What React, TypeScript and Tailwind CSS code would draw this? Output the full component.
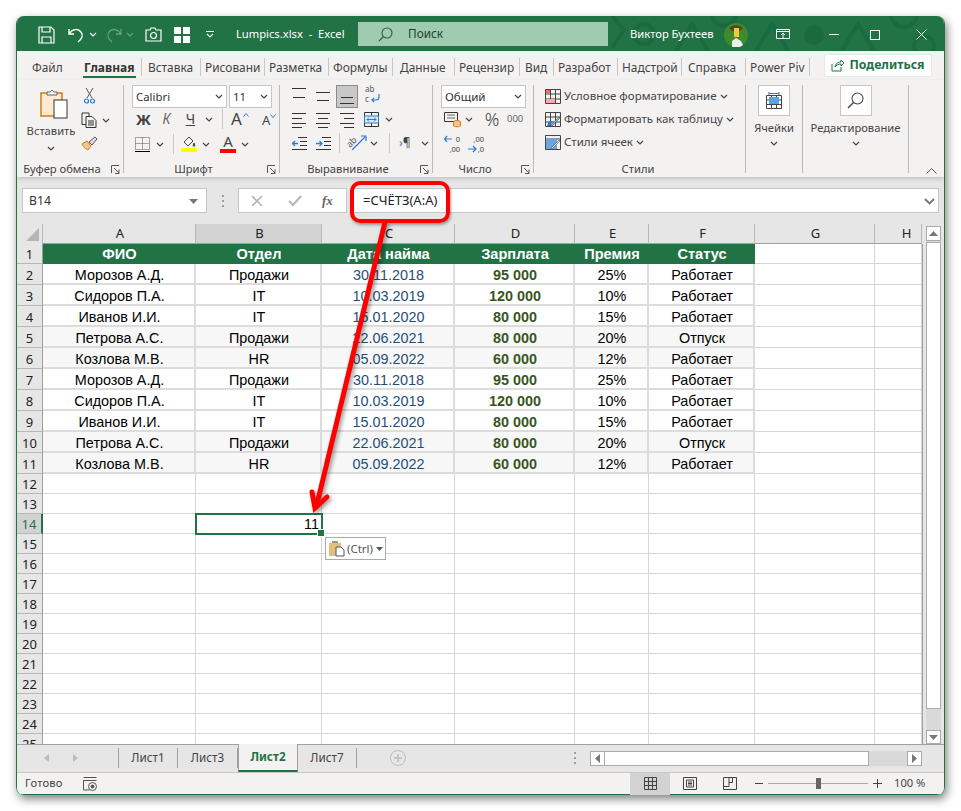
import React from "react";

const Chev = ({ c = "#444", className = "" }: { c?: string; className?: string }) => (
  <svg width="8" height="5" viewBox="0 0 8 5" className={"shrink-0 " + className}>
    <path d="M1 1l3 3 3-3" fill="none" stroke={c} strokeWidth="1.2" />
  </svg>
);

const Launcher = () => (
  <svg width="9" height="9" viewBox="0 0 9 9" className="shrink-0 ml-[4px]">
    <path d="M.5 8V.5H8M3 3l5 5M8 4.5V8.5H4" fill="none" stroke="#555" strokeWidth="1" />
  </svg>
);

const Lines = ({ widths, y = [1, 6, 11, 16], c = "#333", w = 15 }: { widths: [number, number][]; y?: number[]; c?: string; w?: number }) => (
  <svg width={w} height="17" viewBox={`0 0 ${w} 17`} className="shrink-0">
    {widths.map(([a, b], i) => (
      <path key={i} d={`M${a} ${y[i] + 0.5}H${b}`} stroke={c} strokeWidth="1" />
    ))}
  </svg>
);

const tabs: { t: string; w: number; pad: string; active?: boolean }[] = [
  { t: "Файл", w: 60, pad: "pl-[15px]" },
  { t: "Главная", w: 65, pad: "pl-[7px]", active: true },
  { t: "Вставка", w: 59, pad: "pl-[6px]" },
  { t: "Рисовани", w: 64, pad: "pl-[4px]" },
  { t: "Разметка", w: 64, pad: "pl-[4px]" },
  { t: "Формулы", w: 64, pad: "pl-[4px]" },
  { t: "Данные", w: 62, pad: "pl-[7px]" },
  { t: "Рецензир", w: 65, pad: "pl-[4px]" },
  { t: "Вид", w: 34, pad: "pl-[5px]" },
  { t: "Разработ", w: 64, pad: "pl-[4px]" },
  { t: "Надстрой", w: 64, pad: "pl-[4px]" },
  { t: "Справка", w: 64, pad: "pl-[6px]" },
  { t: "Power Piv", w: 64, pad: "pl-[4px]" },
];

const colW = [153, 126, 133, 120, 74, 106, 120, 47];
const colNames = ["A", "B", "C", "D", "E", "F", "G", "H"];
const data: string[][] = [
  ["Морозов А.Д.", "Продажи", "30.11.2018", "95 000", "25%", "Работает"],
  ["Сидоров П.А.", "IT", "10.03.2019", "120 000", "10%", "Работает"],
  ["Иванов И.И.", "IT", "15.01.2020", "80 000", "15%", "Работает"],
  ["Петрова А.С.", "Продажи", "22.06.2021", "80 000", "20%", "Отпуск"],
  ["Козлова М.В.", "HR", "05.09.2022", "60 000", "12%", "Работает"],
  ["Морозов А.Д.", "Продажи", "30.11.2018", "95 000", "25%", "Работает"],
  ["Сидоров П.А.", "IT", "10.03.2019", "120 000", "10%", "Работает"],
  ["Иванов И.И.", "IT", "15.01.2020", "80 000", "15%", "Работает"],
  ["Петрова А.С.", "Продажи", "22.06.2021", "80 000", "20%", "Отпуск"],
  ["Козлова М.В.", "HR", "05.09.2022", "60 000", "12%", "Работает"],
];
const header = ["ФИО", "Отдел", "Дата найма", "Зарплата", "Премия", "Статус"];

const RowHead = ({ n, sel, h, pt }: { n: number; sel?: boolean; h: string; pt: string }) => (
  <div
    className={
      "w-[26px] shrink-0 flex items-center justify-center text-[13px] font-['Noto_Sans',sans-serif] border-b border-[#b8b8b8] " +
      h +
      " " +
      pt +
      (sel ? " bg-[#d2d2d2] text-[#217346] border-r-2 border-r-[#217346]" : " bg-[#e6e6e6] text-[#222] border-r border-r-[#9e9e9e]")
    }
  >
    {n}
  </div>
);

const TitleBar = () => (
  <div className="relative h-[35px] pt-[2px] bg-[#217346] flex items-center text-white shrink-0 overflow-hidden">
    <svg width="340" height="35" viewBox="0 0 340 35" className="absolute right-0 top-0" fill="none" stroke="#1b6a3f" strokeWidth="4">
      <circle cx="40" cy="18" r="10" />
      <path d="M70 38l18-30 18 30zM150 38l18-30 18 30zM236 38l18-30 18 30z" />
      <circle cx="120" cy="-2" r="12" />
      <circle cx="210" cy="19" r="8" fill="#1b6a3f" />
      <circle cx="300" cy="-2" r="13" />
      <circle cx="320" cy="30" r="10" />
      <path d="M8 0l12 14L8 32" />
    </svg>
    <svg width="17" height="18" viewBox="0 0 17 18" className="ml-[21px] shrink-0" fill="none" stroke="#fff" strokeWidth="1.2">
      <path d="M1 1h12l3 3v13H1zM4 1v5h8V1M4 17v-6h9v6" />
    </svg>
    <svg width="16" height="16" viewBox="0 0 16 16" className="ml-[13px] shrink-0" fill="none" stroke="#fff" strokeWidth="1.4">
      <path d="M1 2v5h5M1 7c3-5 9-6 12-2 2.500 3 1 7-3 10" />
    </svg>
    <Chev c="#fff" className="ml-[5px]" />
    <svg width="16" height="16" viewBox="0 0 16 16" className="ml-[9px] shrink-0" fill="none" stroke="#63a283" strokeWidth="1.3">
      <path d="M15 2v5h-5M15 7c-3-5-9-6-12-2-2 3-1 7 3 10" />
    </svg>
    <Chev c="#63a283" className="ml-[4px]" />
    <svg width="17" height="15" viewBox="0 0 17 15" className="ml-[11px] shrink-0" fill="none" stroke="#fff" strokeWidth="1.2">
      <path d="M1 3h4l1-2h4l1 2h5v11H1z" />
      <circle cx="8.500" cy="8.500" r="3" />
    </svg>
    <svg width="16" height="16" viewBox="0 0 16 16" className="ml-[12px] shrink-0" fill="#fff">
      <rect x="0" y="0" width="7" height="7" />
      <rect x="9" y="0" width="7" height="7" />
      <rect x="0" y="9" width="7" height="7" />
      <rect x="9" y="9" width="7" height="7" />
    </svg>
    <svg width="8" height="7" viewBox="0 0 8 7" className="ml-[16px] shrink-0" fill="none" stroke="#fff" strokeWidth="1.1">
      <path d="M0 .5h8M1 3l3 3 3-3" />
    </svg>
    <span className="ml-[22px] w-[122px] text-[11.2px] whitespace-pre">Lumpics.xlsx  -  Excel</span>
    <div className="w-[250px] h-[24px] bg-[#9fcbb1] flex items-center text-[#26402f] text-[11.8px] shrink-0 mt-[-1px]">
      <svg width="15" height="15" viewBox="0 0 15 15" className="ml-[20px]" fill="none" stroke="#2f5d44" strokeWidth="1.1">
        <circle cx="9" cy="6" r="5" />
        <path d="M5.500 9.500L1 14" />
      </svg>
      <span className="ml-[15px]">Поиск</span>
    </div>
    <span className="ml-[22px] w-[94px] text-[11.2px] whitespace-nowrap relative">Виктор Бухтеев</span>
    <svg width="24" height="24" viewBox="0 0 24 24" className="shrink-0 relative">
      <circle cx="12" cy="12" r="12" fill="#3f8a2a" />
      <path d="M5 5a10 10 0 0 1 14 0l-3 3H8z" fill="#5d3f1f" />
      <path d="M10 5h5v9h-5z" fill="#f1c93b" />
      <path d="M8 24v-6l4-3 5 3 2 4-3 2z" fill="#eee" />
    </svg>
    <svg width="14" height="11" viewBox="0 0 14 11" className="ml-[28px] shrink-0 relative" fill="none" stroke="#fff" strokeWidth="1">
      <path d="M.5.500h13v9H.5zM.5 2.500h13M7 9V4M5 6l2-2 2 2" />
    </svg>
    <div className="ml-[39px] w-[10px] h-px bg-white shrink-0 relative" />
    <div className="ml-[31px] w-[10px] h-[10px] border border-white shrink-0 relative" />
    <svg width="11" height="11" viewBox="0 0 11 11" className="ml-[36px] shrink-0 relative" stroke="#fff" strokeWidth="1">
      <path d="M.5.500l10 10M10.500.500l-10 10" />
    </svg>
  </div>
);

const TabsRow = () => (
  <div className="h-[29px] pt-[3px] bg-[#f3f2f1] flex items-center shrink-0 text-[11.9px] text-[#444]">
    {tabs.map(({ t, w, pad, active }, i) => (
      <div
        key={t}
        style={{ width: w }}
        className={
          "h-[18px] shrink-0 overflow-hidden whitespace-nowrap leading-[18px] " +
          pad +
          (i === 0 ? "" : " border-r border-[#c8c6c4]")
        }
      >
        {active ? <span className="font-bold text-[#333] text-[12px]">{t}</span> : t}
      </div>
    ))}
    <div className="ml-[14px] -mt-[3px] w-[108px] h-[23px] bg-white rounded-[2px] border border-[#e8e8e8] flex items-center justify-center text-[#217346] font-bold text-[12.3px] shrink-0">
      <svg width="13" height="13" viewBox="0 0 13 13" className="mr-[5px]" fill="none" stroke="#217346" strokeWidth="1">
        <path d="M1 5v7h9V8M4 8c0-3 3-5 6-5V1l3 3-3 3V5C8 5 5 6 4 8z" />
      </svg>
      Поделиться
    </div>
  </div>
);

const Group = ({ w, label, launcher, children }: { w: number; label?: string; launcher?: boolean; children: React.ReactNode }) => (
  <div style={{ width: w }} className="h-[88px] mt-[5px] border-r border-[#bdbbb9] shrink-0 flex flex-col">
    <div className="h-[76px] shrink-0">{children}</div>
    <div className="h-[16px] flex items-center text-[11.2px] text-[#444] leading-[16px] pr-[3px]">
      <span className="flex-1 text-center">{label}</span>
      {launcher && <Launcher />}
    </div>
  </div>
);

const Clipboard = () => (
  <Group w={107} label="Буфер обмена" launcher>
    <div className="flex">
      <div className="w-[58px] ml-[5px] flex flex-col items-center shrink-0">
        <svg width="28" height="30" viewBox="0 0 28 30" className="mt-[4px] ml-[5px] shrink-0">
          <path d="M1 4h21v23H1z" fill="#fbe9d3" stroke="#d67b12" strokeWidth="1.5" />
          <path d="M7 6V3h3l2-2 2 2h3v3z" fill="#f3f2f1" stroke="#666" strokeWidth="1" />
          <rect x="14" y="11" width="13" height="18" fill="#fff" stroke="#333" strokeWidth="1" />
        </svg>
        <span className="text-[11.2px] text-[#444] mt-[4px] leading-[16px] whitespace-nowrap">Вставить</span>
        <Chev className="mt-[7px]" />
      </div>
      <div className="flex flex-col ml-[1px] shrink-0 items-start">
        <svg width="11" height="16" viewBox="0 0 11 16" className="ml-[3px] mt-[3px]" fill="none">
          <path d="M2 0l6 10M9 0L3 10" stroke="#555" strokeWidth="1" />
          <circle cx="2.500" cy="13" r="2" stroke="#2b7cd3" strokeWidth="1.2" />
          <circle cx="8.500" cy="13" r="2" stroke="#2b7cd3" strokeWidth="1.2" />
        </svg>
        <div className="flex items-center mt-[8px] h-[16px]">
          <svg width="16" height="16" viewBox="0 0 16 16" fill="none" stroke="#333" strokeWidth="1">
            <path d="M5 12.500H1V1h7v3M5 4.500h6l4 4v7H5zM7 9h6M7 11h6M7 13h6" />
          </svg>
          <Chev className="ml-[5px]" />
        </div>
        <svg width="17" height="15" viewBox="0 0 17 15" className="mt-[8px]" fill="none">
          <path d="M1 8l5-3 4 5-3 4C5 13 3 12 1 8z" fill="#f6c48f" stroke="#d67b12" strokeWidth="1" />
          <path d="M8 6l6-5 2 2-5 6z" fill="#ddd" stroke="#555" strokeWidth="1" />
        </svg>
      </div>
    </div>
  </Group>
);

const Caret = ({ up, className = "" }: { up?: boolean; className?: string }) => (
  <svg width="6" height="4" viewBox="0 0 6 4" className={"shrink-0 " + className} fill="none" stroke="#2b7cd3" strokeWidth="1">
    <path d={up ? "M.5 3.500l2.500-3 2.500 3" : "M.5.500l2.500 3 2.500-3"} />
  </svg>
);

const Font = () => (
  <Group w={156} label="Шрифт" launcher>
    <div className="flex pl-[8px]">
      <div className="w-[95px] h-[23px] bg-white border border-[#c6c6c6] flex items-center justify-between px-[3px] text-[11.4px] text-[#333]">
        Calibri
        <Chev />
      </div>
      <div className="w-[43px] h-[23px] ml-[2px] bg-white border border-[#c6c6c6] flex items-center justify-between px-[3px] text-[11.4px] text-[#333]">
        11
        <Chev />
      </div>
    </div>
    <div className="flex items-center pl-[12px] mt-[2px] h-[18px] text-[#444]">
      <span className="w-[14px] text-center font-bold text-[15px] leading-[18px] text-[#444]">Ж</span>
      <span className="ml-[11px] w-[11px] text-center italic text-[14px] leading-[18px] text-[#666]">К</span>
      <span className="ml-[13px] w-[11px] text-center underline text-[14px] leading-[18px]">Ч</span>
      <Chev className="ml-[9px]" />
      <div className="ml-[9px] w-px h-[20px] bg-[#c8c6c4]" />
      <span className="ml-[8px] text-[17px] leading-[18px] text-[#444]">A</span>
      <Caret up className="mb-[8px] ml-[1px]" />
      <span className="ml-[13px] text-[13px] leading-[18px] mt-[2px] text-[#444]">A</span>
      <Caret className="mb-[7px]" />
    </div>
    <div className="flex items-center pl-[11px] mt-[7px] h-[18px]">
      <svg width="15" height="15" viewBox="0 0 15 15" fill="none">
        <path d="M.5.500h14v12H.5zM7.500.500v12M.5 6.500h14" stroke="#555" strokeWidth="1" strokeDasharray="1 1" />
        <path d="M0 14.500h15" stroke="#000" strokeWidth="1" />
      </svg>
      <Chev className="ml-[6px]" />
      <div className="ml-[9px] w-px h-[20px] bg-[#c8c6c4]" />
      <div className="ml-[7px] flex flex-col items-center w-[16px]">
        <svg width="14" height="12" viewBox="0 0 14 12" fill="none" stroke="#444" strokeWidth="1">
          <path d="M2 6l5-5 4 4-5 5zM12 7l1 3h-2z" />
        </svg>
        <div className="w-[16px] h-[4px] bg-[#ffff00]" />
      </div>
      <Chev className="ml-[5px]" />
      <div className="ml-[10px] flex flex-col items-center w-[16px]">
        <span className="text-[15px] leading-[13px] text-[#444]">A</span>
        <div className="w-[16px] h-[4px] bg-[#ff0000] mt-[1px]" />
      </div>
      <Chev className="ml-[5px]" />
    </div>
  </Group>
);

const Align = () => (
  <Group w={153} label="Выравнивание" launcher>
    <div className="flex items-start pl-[12px] h-[23px]">
      <Lines widths={[[0, 14], [1, 13]]} y={[3, 12]} />
      <div className="ml-[9px]">
        <Lines widths={[[0, 14], [1, 13]]} y={[7, 15]} />
      </div>
      <div className="ml-[5px] w-[22px] h-[23px] bg-[#c8c8c8] border border-[#8a8a8a] flex items-center justify-center shrink-0">
        <Lines widths={[[1, 13], [0, 14]]} y={[9, 15]} />
      </div>
      <svg width="16" height="20" viewBox="0 0 16 20" className="ml-[7px] overflow-visible" fill="none">
        <text x="0" y="7" fontSize="8" fill="#555" fontFamily="Noto Sans">ab</text>
        <text x="0" y="17" fontSize="8" fill="#555" fontFamily="Noto Sans">c</text>
        <path d="M14 9v3c0 2-1 3-3 3H7M9 13l-2 2 2 2" stroke="#2b7cd3" strokeWidth="1.200" />
      </svg>
    </div>
    <div className="flex items-center pl-[12px] mt-[2px] h-[18px]">
      <Lines widths={[[0, 14], [0, 10], [0, 14], [0, 10]]} y={[2, 7, 12, 16]} />
      <div className="ml-[9px]"><Lines widths={[[0, 14], [2, 12], [0, 14], [2, 12]]} y={[2, 7, 12, 16]} /></div>
      <div className="ml-[9px]"><Lines widths={[[0, 14], [4, 14], [0, 14], [4, 14]]} y={[2, 7, 12, 16]} /></div>
      <svg width="15" height="15" viewBox="0 0 15 15" className="ml-[9px]" fill="none">
        <path d="M.5.500h14v14H.5zM7.500.500v3M7.500 11v3.500" stroke="#333" />
        <path d="M.5 4h14v7H.5z" fill="#dbeafb" stroke="#2b7cd3" />
        <path d="M3 7.500h9M5 5.500l-2 2 2 2M10 5.500l2 2-2 2" stroke="#2b7cd3" />
      </svg>
      <Chev className="ml-[6px]" />
    </div>
    <div className="flex items-center pl-[12px] mt-[6px] h-[18px]">
      <svg width="15" height="13" viewBox="0 0 15 13" fill="none">
        <path d="M6 .5h9M8 4.500h7M8 8.500h7M0 12.500h15" stroke="#333" />
        <path d="M0 6.500h6M3 4L.5 6.500 3 9" stroke="#2b7cd3" strokeWidth="1.300" />
      </svg>
      <svg width="15" height="13" viewBox="0 0 15 13" className="ml-[9px]" fill="none">
        <path d="M6 .5h9M8 4.500h7M8 8.500h7M0 12.500h15" stroke="#333" />
        <path d="M0 6.500h6M3.500 4L6 6.500 3.500 9" stroke="#2b7cd3" strokeWidth="1.300" />
      </svg>
      <div className="ml-[8px] w-px h-[20px] bg-[#c8c6c4]" />
      <svg width="20" height="18" viewBox="0 0 20 18" className="ml-[7px] overflow-visible" fill="none">
        <text x="0" y="11" fontSize="9" fill="#555" fontFamily="Noto Sans" transform="rotate(-45 5 9)">ab</text>
        <path d="M5 16L18 3M14 2h5v5" stroke="#2b7cd3" strokeWidth="1.200" />
      </svg>
      <Chev className="ml-[3px]" />
      <div className="ml-[11px] w-px h-[20px] bg-[#c8c6c4]" />
      <span className="ml-[9px] text-[12px] leading-[14px] w-[12px] text-[#444] whitespace-nowrap"><span className="text-[#2b7cd3]">›</span>¶</span>
      <Chev className="ml-[10px]" />
    </div>
  </Group>
);

const NumberG = () => (
  <Group w={101} label="Число" launcher>
    <div className="ml-[8px] w-[85px] h-[23px] bg-white border border-[#c6c6c6] flex items-center justify-between px-[3px] text-[11.6px] text-[#333]">
      Общий
      <Chev />
    </div>
    <div className="flex items-center pl-[11px] mt-[2px] h-[18px]">
      <svg width="18" height="17" viewBox="0 0 18 17" fill="none" className="shrink-0">
        <path d="M.5 1.500h13v9H.5z" stroke="#333" />
        <path d="M3 4h8M3 7h8" stroke="#666" />
        <ellipse cx="13" cy="11" rx="3.500" ry="1.500" fill="#f6c48f" stroke="#d67b12" />
        <path d="M9.500 11v4c0 1 7 1 7 0v-4" fill="#f6c48f" stroke="#d67b12" />
      </svg>
      <Chev className="ml-[3px]" />
      <span className="ml-[10px] text-[18px] font-light leading-[18px] text-[#444] w-[18px] text-center">%</span>
      <span className="ml-[6px] text-[9.5px] leading-[18px] text-[#666]">000</span>
    </div>
    <div className="flex items-center pl-[11px] mt-[7px] h-[18px]">
      <div className="w-[16px] h-[19px] flex flex-col justify-between text-[7.5px] leading-[9px] text-[#444]">
        <div className="flex items-center justify-between h-[9px]">
          <svg width="9" height="8" viewBox="0 0 9 8" className="shrink-0" fill="none" stroke="#2b7cd3" strokeWidth="1.200">
            <path d="M0 4h8M3 1L.5 4 3 7" />
          </svg>
          <span>0</span>
        </div>
        <span className="block text-right">,00</span>
      </div>
      <div className="ml-[8px] w-[16px] h-[19px] flex flex-col justify-between text-[7.5px] leading-[9px] text-[#444]">
        <span className="block text-right">,00</span>
        <div className="flex items-center justify-between h-[9px]">
          <svg width="9" height="8" viewBox="0 0 9 8" className="shrink-0" fill="none" stroke="#2b7cd3" strokeWidth="1.200">
            <path d="M0 4h8M5 1l3 3-3 3" />
          </svg>
          <span>,0</span>
        </div>
      </div>
    </div>
  </Group>
);

const StyleRow = ({ icon, text, mt }: { icon: React.ReactNode; text: string; mt: string }) => (
  <div className={"flex items-center h-[18px] pl-[11px] text-[11.5px] text-[#444] " + mt}>
    {icon}
    <span className="ml-[3px] whitespace-nowrap">{text}</span>
    <Chev className="ml-[3px]" />
  </div>
);

const Styles = () => (
  <Group w={212} label="Стили">
    <StyleRow
      mt="mt-[2px]"
      text="Условное форматирование"
      icon={
        <svg width="16" height="15" viewBox="0 0 16 15" fill="none" className="shrink-0">
          <path d="M.5.500h15v14H.5zM5.500.500v14M10.500.500v14M.5 5h15M.5 10h15" stroke="#444" />
          <rect x="1" y="1" width="4" height="4" fill="#f26d6d" />
          <rect x="1" y="10" width="9" height="4" fill="#f9a9a9" />
        </svg>
      }
    />
    <StyleRow
      mt="mt-[5px]"
      text="Форматировать как таблицу"
      icon={
        <svg width="16" height="15" viewBox="0 0 16 15" fill="none" className="shrink-0">
          <path d="M.5.500h15v14H.5zM5.500.500v14M10.500.500v14M.5 5h15M.5 10h15" stroke="#444" />
          <path d="M2 14l2-5h4l-3 5z" fill="#2b7cd3" />
          <path d="M6 13L14 5l1 1-8 8z" fill="#8ab8e8" stroke="#555" strokeWidth=".6" />
        </svg>
      }
    />
    <StyleRow
      mt="mt-[5px]"
      text="Стили ячеек"
      icon={
        <svg width="16" height="15" viewBox="0 0 16 15" fill="none" className="shrink-0">
          <path d="M.5.500h15v14H.5z" stroke="#444" />
          <path d="M1 4h14" stroke="#444" />
          <rect x="1" y="4" width="11" height="10" fill="#6aa7e2" />
          <path d="M6 13L14 5l1 1-8 8z" fill="#ddd" stroke="#555" strokeWidth=".6" />
        </svg>
      }
    />
  </Group>
);

const BigBtn = ({ children }: { children: React.ReactNode }) => (
  <div className="w-[32px] h-[31px] bg-white border border-[#c6c6c6] flex items-center justify-center shrink-0">{children}</div>
);

const Cells = () => (
  <Group w={57}>
    <div className="flex flex-col items-center">
      <BigBtn>
        <svg width="16" height="17" viewBox="0 0 16 17" fill="none">
          <path d="M.5 3.500h15v13H.5zM5.500 3.500v13M10.500 3.500v13M.5 8h15M.5 12.500h15" stroke="#444" />
          <rect x="3" y="5" width="10" height="7" fill="#5ba3e0" />
          <path d="M3 1.500h10M3 0v3M13 0v3" stroke="#2b7cd3" />
        </svg>
      </BigBtn>
      <span className="text-[11.2px] text-[#444] mt-[4px] leading-[16px]">Ячейки</span>
      <Chev className="mt-[5px]" />
    </div>
  </Group>
);

const Editing = () => (
  <Group w={106}>
    <div className="flex flex-col items-center">
      <BigBtn>
        <svg width="17" height="17" viewBox="0 0 17 17" fill="none" stroke="#444" strokeWidth="1.100">
          <circle cx="10.500" cy="6.500" r="5.500" />
          <path d="M6.500 10.500L1 16" strokeWidth="1.500" />
        </svg>
      </BigBtn>
      <span className="text-[11.2px] text-[#444] mt-[4px] leading-[16px] whitespace-nowrap">Редактирование</span>
      <Chev className="mt-[5px]" />
    </div>
  </Group>
);

const Ribbon = () => (
  <div className="h-[97px] bg-[#f3f2f1] flex shrink-0 relative shadow-[0_2px_4px_rgba(0,0,0,0.15)] z-10">
    <Clipboard />
    <Font />
    <Align />
    <NumberG />
    <Styles />
    <Cells />
    <Editing />
    <svg width="11" height="6" viewBox="0 0 11 6" className="ml-[17px] mt-[88px] shrink-0" fill="none" stroke="#555" strokeWidth="1">
      <path d="M.5 5.500l5-5 5 5" />
    </svg>
  </div>
);

const FormulaBar = () => (
  <div className="h-[47px] bg-[#e6e6e6] flex pt-[11px] shrink-0 relative">
    <div className="ml-[5px] w-[185px] h-[25px] pt-[1px] bg-white border border-[#c6c6c6] flex items-center justify-between pl-[6px] pr-[8px] text-[12.2px] text-[#333] shrink-0">
      B14
      <svg width="9" height="5" viewBox="0 0 9 5"><path d="M0 0h9L4.500 5z" fill="#777" /></svg>
    </div>
    <div className="w-[31px] flex flex-col items-center justify-center gap-[3px] h-[25px] shrink-0">
      <i className="w-[2px] h-[2px] bg-[#a0a0a0]" />
      <i className="w-[2px] h-[2px] bg-[#a0a0a0]" />
      <i className="w-[2px] h-[2px] bg-[#a0a0a0]" />
    </div>
    <div className="w-[109px] h-[25px] bg-white border border-[#c6c6c6] flex items-center shrink-0">
      <svg width="12" height="12" viewBox="0 0 12 12" className="ml-[12px]" stroke="#b5b5b5" strokeWidth="1.600"><path d="M1 1l10 10M11 1L1 11" /></svg>
      <svg width="14" height="12" viewBox="0 0 14 12" className="ml-[25px]" fill="none" stroke="#b5b5b5" strokeWidth="2"><path d="M1 6l4 4 8-9" /></svg>
      <span className="ml-[20px] text-[13px] italic font-bold font-['Liberation_Serif',serif] text-[#666]">fx</span>
    </div>
    <div className="ml-[3px] w-[589px] h-[25px] pt-[1px] bg-white border border-[#c6c6c6] flex items-center justify-between pl-[12px] pr-[3px] text-[13px] text-[#222] shrink-0">
      =СЧЁТЗ(А:А)
      <svg width="11" height="7" viewBox="0 0 11 7" fill="none" stroke="#777" strokeWidth="1.800"><path d="M1 1l4.500 4.500L10 1" /></svg>
    </div>
  </div>
);

const Sheet = () => (
  <div className="h-[520px] bg-[#e6e6e6] flex shrink-0 relative">
    <div className="w-[906px] shrink-0 flex flex-col overflow-hidden">
      <div className="flex h-[20px] shrink-0 text-[13px] text-[#222]">
        <div className="w-[26px] shrink-0 border-r border-[#b8b8b8] flex items-end justify-end pr-[3px] pb-[3px]">
          <svg width="13" height="13" viewBox="0 0 13 13"><path d="M13 0v13H0z" fill="#b5b5b5" /></svg>
        </div>
        {colNames.map((c, i) => (
          <div
            key={c}
            style={{ width: colW[i] }}
            className={
              "shrink-0 flex items-center justify-center pt-[1px] border-r border-b border-b-[#9e9e9e] border-r-[#b8b8b8] " +
              (c === "H" ? "pl-[17px] " : "pl-[2px] ") +
              (c === "B" ? "bg-[#d2d2d2]" : "")
            }
          >
            {c}
          </div>
        ))}
      </div>
      <div className="flex-1 bg-white border-r border-[#9e9e9e] overflow-hidden font-['Liberation_Sans',Arial,sans-serif] text-[14.4px] text-black relative">
        <div className="flex h-[20px]">
          <RowHead n={1} h="h-[20px]" pt="pt-[2px]" />
          {header.map((t, i) => (
            <div key={t} style={{ width: colW[i] }} className="shrink-0 pt-[1px] bg-[#217346] text-white text-[14.6px] font-bold flex items-center justify-center">
              {t}
            </div>
          ))}
          {[6, 7].map((i) => (
            <div key={i} style={{ width: colW[i] }} className="shrink-0 border-r border-b border-[#d6d6d6]" />
          ))}
        </div>
        {data.map((r, ri) => {
          const shade = ri === 3 || ri === 4 || ri === 8 || ri === 9;
          return (
            <div key={ri} className="flex h-[21px]">
              <RowHead n={ri + 2} h="h-[21px]" pt="pt-[3px]" />
              {r.map((t, i) => (
                <div
                  key={i}
                  style={{ width: colW[i] }}
                  className={
                    "shrink-0 flex items-center justify-center pt-[4px] pl-[2px] border-r-2 border-b-2 border-[#dcdcdc] " +
                    (shade ? "bg-[#f7f7f7] " : "bg-white ") +
                    (i === 2 ? "text-[#1f4e79] " : "") +
                    (i === 3 ? "text-[#375623] font-bold " : "")
                  }
                >
                  {t}
                </div>
              ))}
              {[6, 7].map((i) => (
                <div key={i} style={{ width: colW[i] }} className="shrink-0 border-r border-b border-[#d6d6d6]" />
              ))}
            </div>
          );
        })}
        {Array.from({ length: 14 }, (_, k) => k + 12).map((n) => (
          <div key={n} className="flex h-[20px]">
            <RowHead n={n} sel={n === 14} h="h-[20px]" pt="pt-[2px]" />
            {colW.map((w, i) => (
              <div
                key={i}
                style={{ width: w }}
                className={
                  "shrink-0 border-r border-b border-[#d6d6d6] flex items-center justify-end " +
                  (n === 14 && i === 1 ? "relative pt-[3px] pr-[2px] outline-2 -outline-offset-1 outline-[#217346] z-10" : "")
                }
              >
                {n === 14 && i === 1 ? (
                  <>
                    <span>11</span>
                    <i className="absolute right-[-4px] bottom-[-4px] w-[6px] h-[6px] bg-[#217346] border border-white box-content" />
                  </>
                ) : null}
              </div>
            ))}
          </div>
        ))}
      </div>
    </div>
    <div className="ml-[3px] w-[15px] shrink-0 flex flex-col pt-[2px]">
      <div className="h-[15px] bg-white border border-[#ababab] flex items-center justify-center shrink-0">
        <svg width="9" height="5" viewBox="0 0 9 5"><path d="M0 5h9L4.500 0z" fill="#777" /></svg>
      </div>
      <div className="flex-1 bg-[#d9d9d9] flex flex-col pt-[1px]">
        <div className="h-[467px] bg-white border border-[#ababab]" />
      </div>
      <div className="h-[14px] bg-white border border-[#ababab] flex items-center justify-center shrink-0">
        <svg width="9" height="5" viewBox="0 0 9 5"><path d="M0 0h9L4.500 5z" fill="#777" /></svg>
      </div>
    </div>
  </div>
);

const SheetTabs = () => (
  <div className="h-[28px] bg-[#e6e6e6] border-t border-[#a0a0a0] flex shrink-0 text-[11.7px] text-[#444]">
    <svg width="5" height="8" viewBox="0 0 5 8" className="ml-[27px] mt-[9px] shrink-0"><path d="M5 0v8L0 4z" fill="#bbb" /></svg>
    <svg width="5" height="8" viewBox="0 0 5 8" className="ml-[24px] mt-[9px] shrink-0"><path d="M0 0v8l5-4z" fill="#bbb" /></svg>
    <div className="ml-[40px] w-[60px] h-[20px] mt-[3px] border-x border-[#a0a0a0] flex items-center justify-center shrink-0">Лист1</div>
    <div className="w-[60px] h-[20px] mt-[3px] border-r border-[#a0a0a0] flex items-center justify-center shrink-0">Лист3</div>
    <div className="w-[60px] h-[28px] -mt-px bg-[#f3f2f1] border-x border-[#a0a0a0] border-b-2 border-b-[#217346] flex items-center justify-center shrink-0 font-bold text-[#217346]">Лист2</div>
    <div className="w-[59px] h-[20px] mt-[3px] border-r border-[#a0a0a0] flex items-center justify-center shrink-0">Лист7</div>
    <svg width="16" height="16" viewBox="0 0 16 16" className="ml-[33px] mt-[5px] shrink-0" fill="none" stroke="#bdbdbd">
      <circle cx="8" cy="8" r="7.500" />
      <path d="M8 4v8M4 8h8" strokeWidth="1.500" />
    </svg>
    <div className="ml-[168px] mt-[7px] flex flex-col gap-[3px] shrink-0">
      <i className="w-[2px] h-[2px] bg-[#a0a0a0]" />
      <i className="w-[2px] h-[2px] bg-[#a0a0a0]" />
      <i className="w-[2px] h-[2px] bg-[#a0a0a0]" />
    </div>
    <div className="ml-[14px] mt-[6px] w-[332px] h-[15px] flex bg-[#d9d9d9] shrink-0">
      <div className="w-[15px] bg-white border border-[#ababab] flex items-center justify-center">
        <svg width="5" height="9" viewBox="0 0 5 9"><path d="M5 0v9L0 4.500z" fill="#777" /></svg>
      </div>
      <div className="w-[264px] bg-white border-y border-r border-[#ababab]" />
      <div className="flex-1" />
      <div className="w-[15px] bg-white border border-[#ababab] flex items-center justify-center">
        <svg width="5" height="9" viewBox="0 0 5 9"><path d="M0 0v9l5-4.500z" fill="#777" /></svg>
      </div>
    </div>
  </div>
);

const StatusBar = () => (
  <div className="h-[23px] bg-[#f3f2f1] border-t border-[#c8c6c4] border-b border-b-[#217346] flex items-center shrink-0 text-[11.2px] text-[#444]">
    <span className="ml-[8px] w-[58px] tracking-[0.2px]">Готово</span>
    <svg width="14" height="14" viewBox="0 0 14 14" fill="none" stroke="#555" className="shrink-0">
      <path d="M.5.500h13M.5 3.500h13M.5 3v10h6" />
      <circle cx="9.500" cy="9.500" r="4" />
      <circle cx="9.500" cy="9.500" r="1.500" fill="#555" />
    </svg>
    <div className="ml-[533px] w-[40px] h-[22px] bg-[#d2d2d2] flex items-center justify-center shrink-0">
      <svg width="13" height="13" viewBox="0 0 13 13" fill="none" stroke="#444">
        <path d="M.5.500h12v12H.5zM4.500.500v12M8.500.500v12M.5 4.500h12M.5 8.500h12" />
      </svg>
    </div>
    <svg width="14" height="13" viewBox="0 0 14 13" className="ml-[13px] shrink-0" fill="none" stroke="#444">
      <path d="M.5.500h13v12H.5zM3.500 3h7v7h-7zM5 5h4M5 6.500h4M5 8h4" />
    </svg>
    <svg width="14" height="13" viewBox="0 0 14 13" className="ml-[26px] shrink-0" fill="none" stroke="#444">
      <path d="M.5.500h13v12H.5zM.5 9.500h5.500V.5M6 5.500h3.500V.5" />
    </svg>
    <div className="ml-[18px] w-[8px] h-px bg-[#444] shrink-0" />
    <div className="ml-[5px] w-[100px] h-[10px] flex items-center justify-start shrink-0 border-0">
      <div className="w-[48px] h-px bg-[#a8a8a8]" />
      <div className="w-[5px] h-[11px] bg-[#666]" />
      <div className="w-[47px] h-px bg-[#a8a8a8]" />
    </div>
    <svg width="9" height="9" viewBox="0 0 9 9" className="ml-[5px] shrink-0" stroke="#444"><path d="M0 4.500h9M4.500 0v9" /></svg>
    <span className="ml-[12px] whitespace-nowrap">100 %</span>
  </div>
);

export default function App() {
  return (
    <div className="w-[961px] h-[811px] bg-white pl-[16px] pt-[16px] overflow-hidden font-['Noto_Sans',sans-serif]">
      <div className="relative w-[929px] h-[779px] rounded-[8px] overflow-hidden border-x border-[#217346] shadow-[2px_4px_10px_rgba(0,0,0,0.5)] flex flex-col">
        <TitleBar />
        <TabsRow />
        <Ribbon />
        <FormulaBar />
        <Sheet />
        <SheetTabs />
        <StatusBar />
        {/* active ribbon tab underline */}
        <div className="absolute left-[66px] top-[60px] w-[53px] h-[2px] bg-[#217346] z-20" />
        {/* paste options */}
        <div className="absolute left-[308px] top-[521px] w-[61px] h-[23px] bg-white border border-[#ababab] flex items-center pl-[3px] text-[11.5px] text-[#555] z-20">
          <svg width="16" height="17" viewBox="0 0 16 17" className="shrink-0">
            <path d="M0 3h12v13H0z" fill="#e4bd80" />
            <path d="M3 3V1h6v2z" fill="#999" />
            <path d="M7 7h5l3 3v6H7z" fill="#fff" stroke="#555" />
          </svg>
          <span className="ml-[2px]">(Ctrl)</span>
          <svg width="7" height="4" viewBox="0 0 7 4" className="ml-[3px]"><path d="M0 0h7L3.500 4z" fill="#555" /></svg>
        </div>
        {/* annotation */}
        <div className="absolute left-[333px] top-[165px] w-[100px] h-[42px] border-[4px] border-[#ff0000] rounded-[10px] z-30 shadow-[1px_2px_3px_rgba(0,0,0,0.35)]" />
        <svg width="927" height="779" viewBox="0 0 927 779" className="absolute left-0 top-0 z-30 pointer-events-none drop-shadow-[2px_2px_2px_rgba(0,0,0,0.4)]" fill="none" stroke="#ff0000">
          <path d="M368 206L300 488" strokeWidth="5" />
          <path d="M295 476L298 492L310 481" strokeWidth="5" strokeLinecap="round" />
        </svg>
      </div>
    </div>
  );
}
